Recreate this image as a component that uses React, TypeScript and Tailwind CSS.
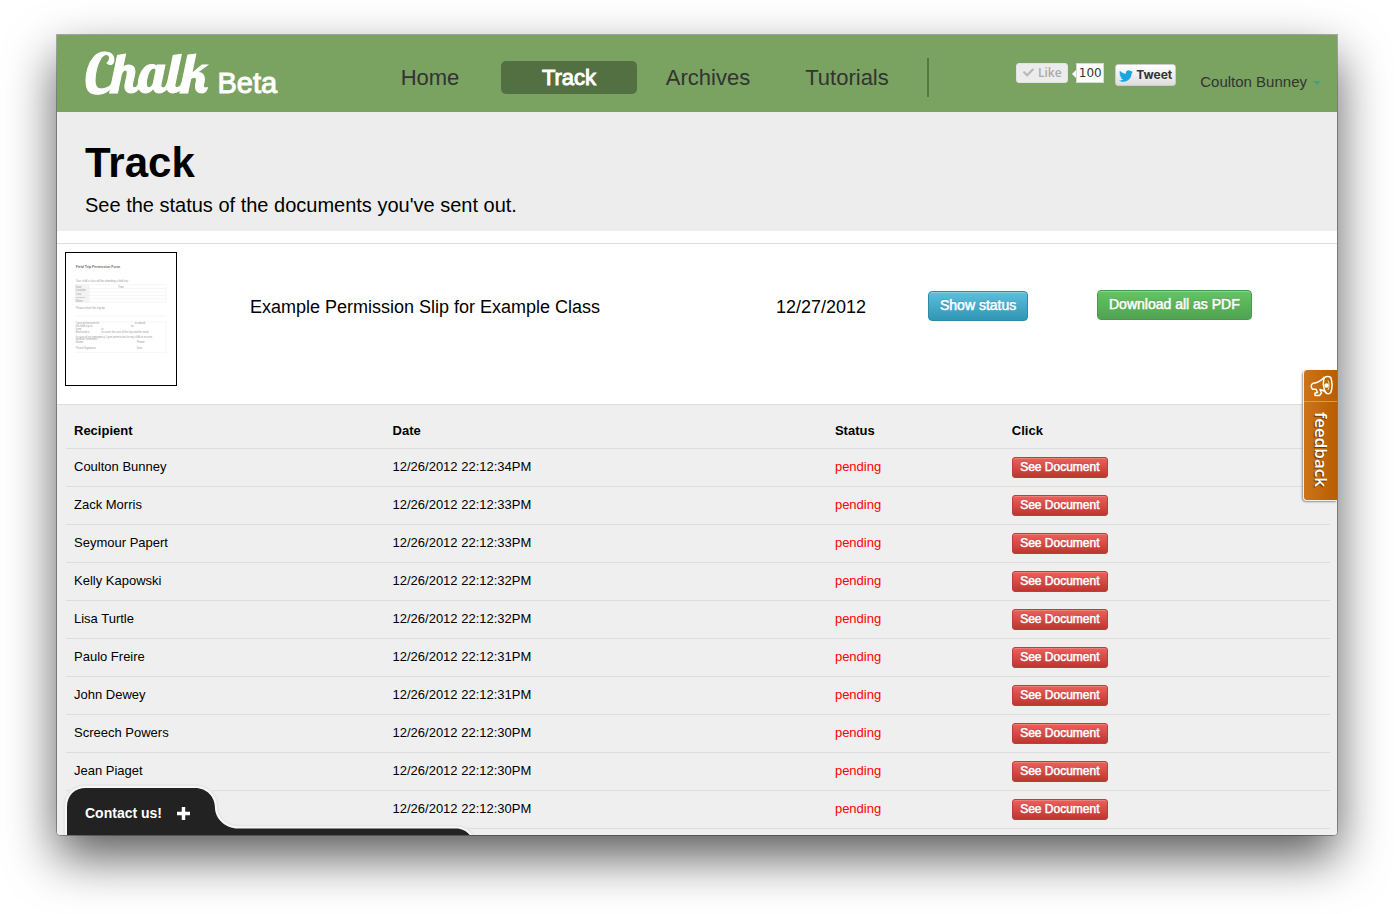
import { FaCheck, FaTwitter } from "react-icons/fa";

const navItems = ["Home", "Track", "Archives", "Tutorials"];

const recipients = [
  ["Coulton Bunney", "12/26/2012 22:12:34PM"],
  ["Zack Morris", "12/26/2012 22:12:33PM"],
  ["Seymour Papert", "12/26/2012 22:12:33PM"],
  ["Kelly Kapowski", "12/26/2012 22:12:32PM"],
  ["Lisa Turtle", "12/26/2012 22:12:32PM"],
  ["Paulo Freire", "12/26/2012 22:12:31PM"],
  ["John Dewey", "12/26/2012 22:12:31PM"],
  ["Screech Powers", "12/26/2012 22:12:30PM"],
  ["Jean Piaget", "12/26/2012 22:12:30PM"],
  ["", "12/26/2012 22:12:30PM"],
];

function Header() {
  return (
    <header className="flex h-[77px] items-center bg-[#7aa261]">
      <a href="#" className="flex w-[305px] shrink-0 items-baseline gap-[10px] pt-[2px] pl-7 text-white">
        <span className="font-['Lobster','Liberation_Serif',serif] text-[54px] leading-[60px] [-webkit-text-stroke:1px_white]">
          Chalk
        </span>
        <span className="text-[29px] [-webkit-text-stroke:1px_white]">Beta</span>
      </a>
      <nav className="mt-2 flex gap-[3px]">
        {navItems.map((item) => (
          <a
            key={item}
            href="#"
            className={
              item === "Track"
                ? "w-[136px] rounded-[5px] bg-[#527042] text-center text-[22px] leading-[33px] text-white [-webkit-text-stroke:1px_white]"
                : "w-[136px] text-center text-[22px] leading-[33px] text-[#333]"
            }
          >
            {item}
          </a>
        ))}
      </nav>
      <div className="mt-2 ml-3 h-[39px] w-[2px] bg-[#56793f]" />
      <div className="mr-4 ml-auto flex items-center">
        <button className="mb-[2px] flex h-5 w-[52px] items-center justify-center gap-1 rounded-[3px] border border-[#e2e2e2] bg-[#ececec] font-['Open_Sans',sans-serif] text-[12px] font-semibold text-[#aaa]">
          <FaCheck className="size-[11px] text-[#b8b8b8]" />
          Like
        </button>
        <svg className="ml-1" width="4" height="8" viewBox="0 0 4 8" aria-hidden="true">
          <path d="M4 0v8L0 4z" fill="#fff" />
        </svg>
        <span className="mb-[2px] h-5 w-[28px] border border-[#d5dccf] bg-white text-center font-['DejaVu_Sans',sans-serif] text-[12px] leading-[18px] text-[#333]">
          100
        </span>
        <button className="mt-[2px] ml-[11px] flex h-[22px] w-[61px] items-center justify-center gap-[3px] rounded-[3px] border border-[#ccc] bg-linear-to-b from-white to-[#dedede] font-['Inter',sans-serif] text-[12px] font-bold text-[#333]">
          <FaTwitter className="mt-[2px] size-[14px] text-[#1ba5e0]" />
          Tweet
        </button>
        <button className="mt-[18px] ml-6 flex items-center gap-[6px] text-[15px] text-[#333]">
          Coulton Bunney
          <svg width="8" height="4" viewBox="0 0 8 4" aria-hidden="true">
            <path d="M0 0h8L4 4z" fill="#4f9c85" />
          </svg>
        </button>
      </div>
    </header>
  );
}

function Thumbnail() {
  return (
    <svg
      viewBox="0 0 112 134"
      className="h-[134px] w-[112px] border border-black bg-white"
      role="img"
      aria-label="Permission form"
      fontFamily="Liberation Sans, sans-serif"
      fontSize="2.7"
      fill="#777"
    >
      <g opacity="0.75">
        <text x="10" y="15.500" fontSize="3.500" fontWeight="bold" fill="#333">Field Trip Permission Form</text>
        <text x="10" y="29">Your child's class will be attending a field trip:</text>
        <rect x="9" y="32" width="15" height="18" fill="#f1f1f1" />
        <path
          d="M9 32H102M9 36H102M9 39.500H102M9 43H102M9 46.500H102M9 50H102M102 32V50M9 64H102M9 70H102M9 101H102M102 70V101"
          fill="none"
          stroke="#e9e9e9"
          strokeWidth="0.5"
        />
        <text x="10" y="35">Date</text>
        <text x="53" y="35">Time</text>
        <text x="10" y="38.700">Location</text>
        <text x="10" y="42.300">Cost</text>
        <text x="10" y="45.800" fontSize="2.200">Transport</text>
        <text x="10" y="49.500">Notes</text>
        <text x="10" y="56.500">Please return this slip by:</text>
        <text x="10" y="72">I give permission for</text>
        <text x="70" y="72">to attend</text>
        <text x="10" y="75">the field trip to</text>
        <text x="66" y="75">on</text>
        <text x="10" y="78">from</text>
        <text x="36" y="78">to</text>
        <text x="10" y="81">Enclosed is</text>
        <text x="36" y="81">to cover the cost of the trip and the meal</text>
        <text x="10" y="86.500">In case of an emergency, I give permission for my child to receive</text>
        <text x="10" y="88.500">medical treatment.</text>
        <text x="10" y="91">Name:</text>
        <text x="72" y="91">Phone:</text>
        <text x="10" y="98">Parent Signature</text>
        <text x="72" y="98">Date</text>
      </g>
    </svg>
  );
}

function DocumentSummary() {
  return (
    <section className="grid grid-cols-[185fr_526fr_152fr_169fr_248fr] items-start border-y border-[#ddd] pb-[18px] text-[18px] text-black *:pl-2">
      <div className="pt-2">
        <Thumbnail />
      </div>
      <p className="pt-[46px] leading-[34px]">Example Permission Slip for Example Class</p>
      <p className="pt-[46px] leading-[34px]">12/27/2012</p>
      <div className="pt-[47px]">
        <button className="block h-[30px] rounded-[4px] border border-[#2e8aa5] bg-linear-to-b from-[#5bc0de] to-[#2f96b4] px-[11px] pb-[2px] text-[14px] leading-[26px] whitespace-nowrap text-white shadow-[inset_0_1px_0_rgba(255,255,255,0.25)] [-webkit-text-stroke:0.5px_white] [text-shadow:0_-1px_0_rgba(0,0,0,0.25)]">
          Show status
        </button>
      </div>
      <div className="pt-[46px]">
        <button className="block h-[30px] rounded-[4px] border border-[#4b984b] bg-linear-to-b from-[#62c462] to-[#51a351] px-[11px] pb-[2px] text-[14px] leading-[26px] whitespace-nowrap text-white shadow-[inset_0_1px_0_rgba(255,255,255,0.25)] [-webkit-text-stroke:0.5px_white] [text-shadow:0_-1px_0_rgba(0,0,0,0.25)]">
          Download all as PDF
        </button>
      </div>
    </section>
  );
}

function RecipientTable() {
  return (
    <section className="bg-[#efefef] pr-[7px] pb-[6px] pl-[9px]">
      <table className="w-full table-fixed border-collapse text-left text-[13px] text-black">
        <thead>
          <tr className="h-[43px] border-b border-[#ddd]">
            <th className="w-[25.2%] px-2 pt-2">Recipient</th>
            <th className="w-[35%] px-2 pt-2">Date</th>
            <th className="w-[14%] px-2 pt-2">Status</th>
            <th className="px-2 pt-2">Click</th>
          </tr>
        </thead>
        <tbody>
          {recipients.map(([name, date], i) => (
            <tr key={i} className="h-[38px] border-b border-[#ddd]">
              <td className="px-2">{name}</td>
              <td className="px-2">{date}</td>
              <td className="px-2 text-[#f00]">pending</td>
              <td className="px-2">
                <button className="block h-[21px] w-24 rounded-[3px] border border-[#b8403b] bg-linear-to-b from-[#ee5f5b] to-[#bd362f] text-[12px] leading-[19px] text-white shadow-[inset_0_1px_0_rgba(255,255,255,0.2)] [-webkit-text-stroke:0.5px_white] [text-shadow:0_-1px_0_rgba(0,0,0,0.25)]">
                  See Document
                </button>
              </td>
            </tr>
          ))}
        </tbody>
      </table>
    </section>
  );
}

function FeedbackTab() {
  return (
    <button className="absolute top-[335px] right-0 flex h-[131px] w-[34px] flex-col items-center rounded-l-[4px] border-b border-l border-[#f4eee6] bg-linear-to-r from-[#cd7418] to-[#b85d00] shadow-[-1px_1px_2px_rgba(0,0,0,0.4)]">
      <span className="flex h-8 w-full items-center justify-center border-b border-[#d99a58]">
        <svg width="24" height="24" viewBox="0 0 24 24" fill="none" stroke="#fff" strokeWidth="1.500" strokeLinejoin="round" aria-hidden="true">
          <path d="M15.500 3C12.500 6.500 8 8.800 3.500 9.500C1.800 10.800 1.800 13.700 3.500 15.200H7L8.500 18.500L6 19V21.500H10.500L12.500 19L11 15.500C14 16 16 17.200 17.500 19" />
          <path d="M15.500 3.500C17 2.300 20.500 2.300 21.800 3.500C23.300 8 23.300 14 21.800 18.500C20.500 20 18 20 17 18.700C13.800 15 13.800 7 15.500 3.500Z" />
          <path d="M19 6.500C20.500 9 20.500 13.500 19 16" strokeWidth="0.800" />
          <circle cx="17.500" cy="11.500" r="2.200" fill="#fff" stroke="none" />
        </svg>
      </span>
      <span className="pt-[10px] font-['Open_Sans',sans-serif] text-[17px] leading-[30px] font-semibold text-white [text-shadow:1px_1px_1px_rgba(60,30,0,0.7)] [writing-mode:vertical-rl]">
        feedback
      </span>
    </button>
  );
}

const contactShape =
  "M7 58V27C7 15 15 8 26 8H135C147 8 155 17 155 28C155 38 165 48.500 178 48.500H396C403 48.500 408 52 412 58Z";

function ContactTab() {
  return (
    <div className="absolute bottom-0 left-[3px] h-[55px] w-[420px]">
      <svg width="420" height="55" viewBox="0 0 420 55" aria-hidden="true">
        <path d={contactShape} fill="#222" stroke="#e8e8e8" strokeWidth="8" />
        <path d={contactShape} fill="#222" stroke="#f7f7f7" strokeWidth="4" />
        <path d={contactShape} fill="#222" />
      </svg>
      <button className="absolute top-[10px] left-[7px] flex h-[47px] w-[148px] items-center gap-[15px] pl-[18px] text-[14px] font-bold text-white">
        Contact us!
        <svg width="13" height="13" viewBox="0 0 13 13" aria-hidden="true">
          <path d="M5 0h3v5h5v3H8v5H5V8H0V5h5z" fill="#fff" stroke="#fff" strokeWidth="0.500" />
        </svg>
      </button>
    </div>
  );
}

export default function App() {
  return (
    <div className="bg-white px-[57px] pt-[35px] pb-[79px] font-['Liberation_Sans',Arial,sans-serif]">
      <div className="rounded-b-[4px] shadow-[0_0_0_1px_rgba(0,0,0,0.3),0_22px_50px_rgba(0,0,0,0.65)]">
        <main className="relative overflow-hidden rounded-b-[4px] bg-white">
          <Header />
          <section className="mb-3 h-[119px] bg-[#ededed] px-7 pt-[26px] text-black">
            <h1 className="text-[42px] leading-[50px] font-bold">Track</h1>
            <p className="mt-1 text-[20px] leading-[26px]">See the status of the documents you've sent out.</p>
          </section>
          <DocumentSummary />
          <RecipientTable />
          <FeedbackTab />
          <ContactTab />
        </main>
      </div>
    </div>
  );
}
